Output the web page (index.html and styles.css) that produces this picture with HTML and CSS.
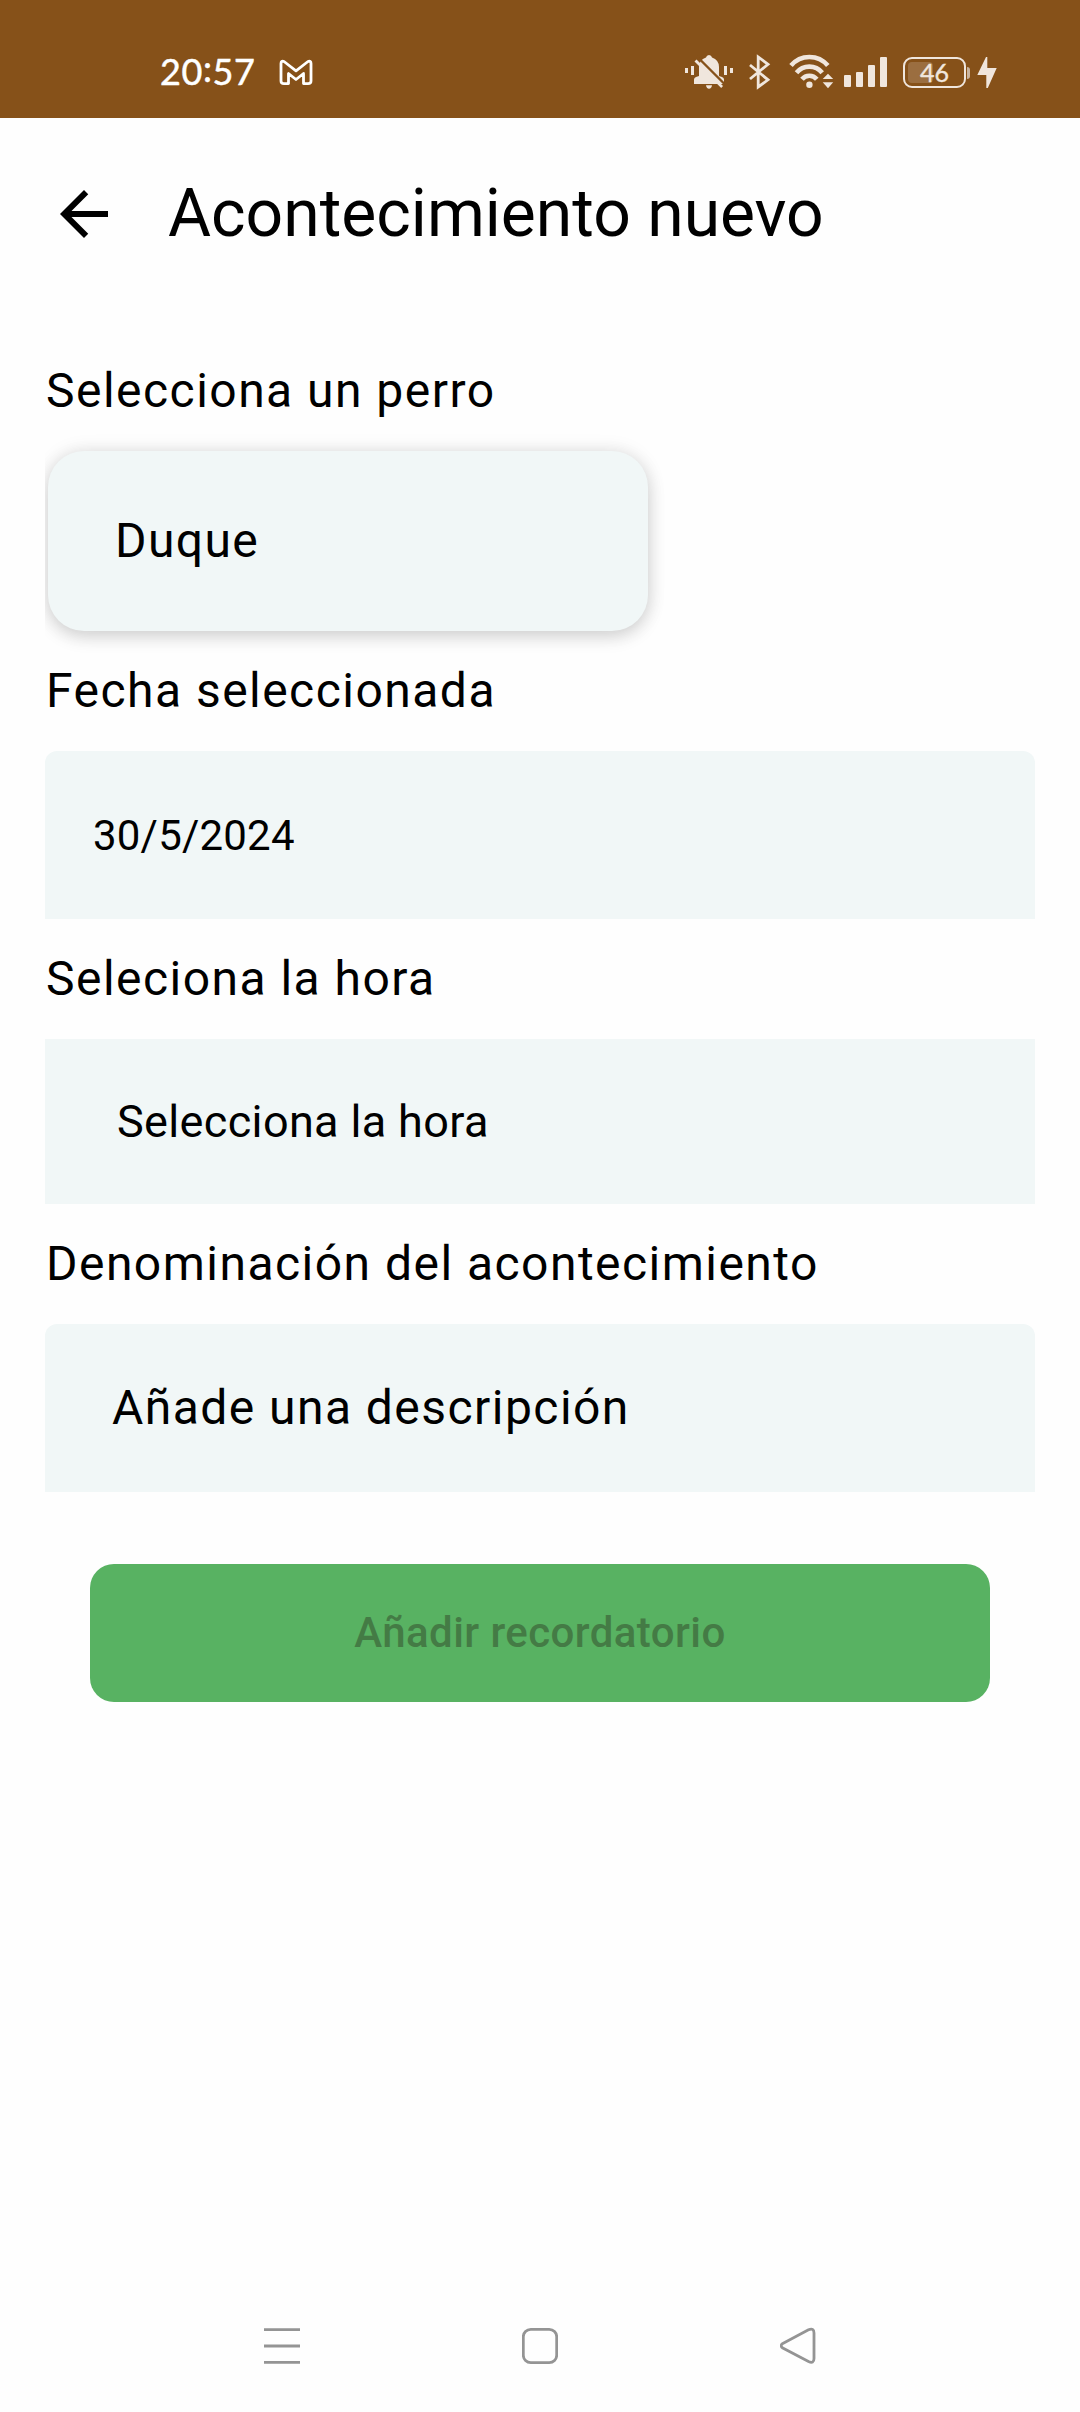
FILE: index.html
```html
<!DOCTYPE html>
<html lang="es">
<head>
<meta charset="utf-8">
<title>Acontecimiento nuevo</title>
<link rel="stylesheet" href="styles.css">
</head>
<body>
<div class="screen">
  <div class="status-bar">
    <div class="status-left">
      <span class="clock">20<span class="colon">:</span>57</span>
      <svg class="icon" width="34" height="40" viewBox="279 50 34 40"><path d="M284 61.500 L296 70.800 L308 61.500 Q311 60.500 311 63.500 V81 Q311 83.600 308 83.600 H303.500 V73.500 L296 79.500 L288.500 73.500 V83.600 H284 Q281 83.600 281 81 V63.500 Q281 60.500 284 61.500 Z" fill="none" stroke="#fff" stroke-width="2.8" stroke-linejoin="round"/></svg>
    </div>
    <div class="status-right">
      <svg class="icon" width="50" height="40" viewBox="684 50 50 40">
        <path d="M694 84 V79.500 Q694 77.500 696 77 L699 76 V67 Q699 60 706 57.500 Q706.500 55 709 55 Q711.500 55 712 57.500 Q719 60 719 67 V76 L722 77 Q724 77.500 724 79.500 V84 Z M706 85.300 H712 Q711.500 88.700 709 88.700 Q706.500 88.700 706 85.300 Z"/>
        <path class="cut" d="M697 56.500 L727 86.500"/>
        <path d="M696.500 59.500 L723 86 L721.200 88 L694.500 61.500 Z"/>
        <path d="M685 68h3v5h-3z M691 66h3v9h-3z M724 66h3v9h-3z M730 68h3v5h-3z"/>
      </svg>
      <svg class="icon bluetooth" width="22" height="40" viewBox="749 50 22 40"><path d="M750 65 L768 79.800 L758.200 87 V57 L768 64.300 L750 79"/></svg>
      <svg class="icon wifi" width="46" height="40" viewBox="789 50 46 40">
        <g class="arcs"><path d="M791 65.600 A24 24 0 0 1 827.800 65.600"/><path d="M796.500 72.800 A16.500 16.500 0 0 1 822.200 72.800"/><path d="M802 79.300 A9.500 9.500 0 0 1 816.800 79.300"/></g>
        <circle cx="809.400" cy="84.700" r="3.200"/><path d="M822.700 79 L828 73.700 L833.200 79 Z M822.700 82.300 H833.200 L828 88.200 Z"/>
      </svg>
      <svg class="icon signal" width="43" height="40" viewBox="844 50 43 40"><rect x="844" y="75" width="7" height="12" rx="1"/><rect x="856" y="72" width="7" height="15" rx="1"/><rect x="868" y="65" width="7" height="22" rx="1"/><rect x="880" y="57" width="7" height="30" rx="1"/></svg>
      <div class="battery"><span class="charge"></span><span class="level">46</span></div>
      <span class="nub"></span>
      <svg class="icon bolt" width="20" height="40" viewBox="977 50 20 40"><path d="M986 57 L977.300 75 H986.300 V88 H987.800 L996.700 68 H987.300 V57 Z"/></svg>
    </div>
  </div>

  <header class="app-bar">
    <svg class="back" width="72" height="72" viewBox="0 0 24 24"><path d="M20 11H7.830l5.590-5.590L12 4l-8 8 8 8 1.410-1.410L7.830 13H20v-2z"/></svg>
    <h1 class="title">Acontecimiento nuevo</h1>
  </header>

  <main class="form">
    <div class="label">Selecciona un perro</div>
    <div class="dog-wrap"><div class="dog-card">Duque</div></div>
    <div class="label">Fecha seleccionada</div>
    <div class="field rounded date">30/5/2024</div>
    <div class="label">Seleciona la hora</div>
    <div class="field time">Selecciona la hora</div>
    <div class="label">Denominación del acontecimiento</div>
    <div class="field rounded description">Añade una descripción</div>
    <button class="submit" disabled>Añadir recordatorio</button>
  </main>

  <nav class="nav-bar">
    <svg width="36" height="40" viewBox="264 2326 36 40"><path d="M264 2329.600h36M264 2346h36M264 2362.400h36"/></svg>
    <svg width="36" height="40" viewBox="522 2326 36 40"><rect x="523.300" y="2329.300" width="33.400" height="33.400" rx="7.500"/></svg>
    <svg width="36" height="40" viewBox="780 2326 36 40"><path d="M782.800 2343.400 L808.500 2329.800 Q814 2327.500 814 2333 V2358.500 Q814 2364 808.500 2361.500 L782.800 2348 Q779.500 2345.700 782.800 2343.400 Z"/></svg>
  </nav>
</div>
</body>
</html>
```
FILE: styles.css
```css
* { box-sizing: border-box; }

body {
  margin: 0;
  background: #fefefe;
  color: #000;
  font-family: Roboto, sans-serif;
}

.screen {
  width: 1080px;
  height: 2412px;
  display: flex;
  flex-direction: column;
  overflow: hidden;
}

.status-bar {
  height: 118px;
  flex: none;
  padding: 50px 83px 0 160px;
  display: flex;
  justify-content: space-between;
  align-items: flex-start;
  background: #865119;
}

.status-left,
.status-right {
  height: 40px;
  display: flex;
  align-items: center;
}

.status-left { gap: 24px; }

.clock {
  width: 95px;
  padding-top: 2px;
  color: #fff;
  font: 400 36px/40px Lato, sans-serif;
  letter-spacing: 0.6px;
  -webkit-text-stroke: 0.5px #fff;
  white-space: nowrap;
}

.colon { position: relative; top: -3px; }

.icon { display: block; flex: none; fill: #f0e6dd; }

.cut { stroke: #865119; stroke-width: 2.4; fill: none; }

.bluetooth { margin-left: 15px; fill: none; stroke: #f0e6dd; stroke-width: 2.8; }

.wifi { margin-left: 18px; }
.arcs { fill: none; stroke: #f0e6dd; stroke-width: 4.6; }

.signal { margin-left: 9px; }

.battery {
  width: 63px;
  height: 31px;
  margin: 5px 0 0 16px;
  padding: 3px;
  display: grid;
  align-items: center;
  border: 2px solid #f0e6dd;
  border-radius: 9px;
}

.charge,
.level { grid-area: 1 / 1; }

.charge {
  width: 25px;
  height: 21px;
  border-radius: 4px;
  background: rgba(240, 230, 221, 0.2);
}

.level {
  color: #f0e6dd;
  font: 400 25px/21px Lato, sans-serif;
  -webkit-text-stroke: 0.4px #f0e6dd;
  text-align: center;
}

.nub {
  width: 3px;
  height: 12px;
  margin: 5px 7px 0 1px;
  border-radius: 0 3px 3px 0;
  background: #c9b49f;
}

.app-bar {
  height: 192px;
  flex: none;
  padding: 0 48px;
  display: flex;
  align-items: center;
  gap: 48px;
}

.back { display: block; }

.title {
  margin: 0;
  font-size: 66px;
  font-weight: 400;
  line-height: 84px;
}

.form {
  flex: 1;
  padding: 21px 45px 0;
  display: flex;
  flex-direction: column;
}

.label {
  height: 120px;
  padding: 24px 1px;
  font-size: 48px;
  line-height: 72px;
  letter-spacing: 1.47px;
}

/* The card's shadow is cut off at the left edge of the form. */
.dog-wrap {
  margin: -40px 0;
  padding: 40px 3px;
  overflow: hidden;
}

.dog-card {
  width: 600px;
  height: 180px;
  padding-left: 67px;
  display: flex;
  align-items: center;
  border-radius: 36px;
  background: #f1f7f7;
  box-shadow: 0 6px 18px rgba(0, 0, 0, 0.14), 0 0 20px rgba(0, 0, 0, 0.09);
  font-size: 48px;
  line-height: 72px;
  letter-spacing: 1.4px;
}

.field {
  height: 168px;
  display: flex;
  align-items: center;
  background: #f1f7f7;
}

.rounded { border-radius: 12px 12px 0 0; }

.date { padding-left: 48px; font-size: 42px; letter-spacing: 0.2px; }

.time { height: 165px; padding-left: 72px; font-size: 45px; letter-spacing: 0.35px; }

.description { padding: 0 0 2px 67px; font-size: 48px; letter-spacing: 1.45px; }

.submit {
  height: 138px;
  margin: 72px 45px 0;
  padding: 0;
  border: 0;
  border-radius: 24px;
  background: #58b262;
  color: #447b45;
  font: 500 42px/60px Roboto, sans-serif;
  letter-spacing: 0.42px;
}

.nav-bar {
  height: 132px;
  flex: none;
  padding: 46px 264px 0;
  display: flex;
  justify-content: space-between;
  align-items: flex-start;
}

.nav-bar svg { fill: none; stroke: #949494; stroke-width: 2.8; }
```
